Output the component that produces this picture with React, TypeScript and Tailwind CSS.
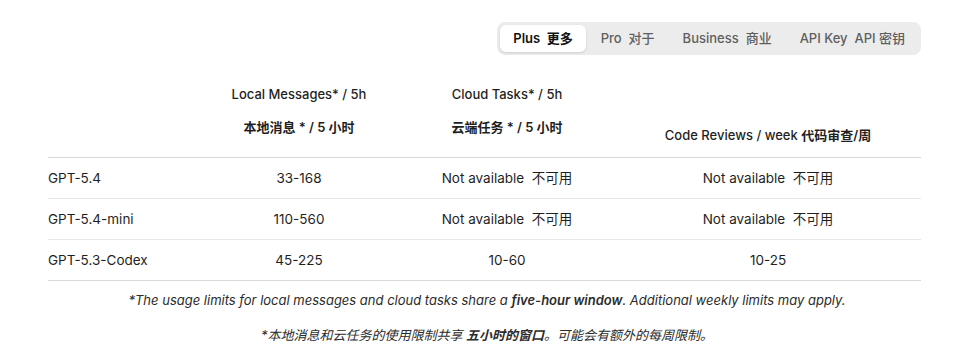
const FONT = "font-['Inter','Noto_Sans_CJK_SC',sans-serif]";

type Row = {
  model: string;
  local: string;
  cloud: string;
  review: string;
};

const NA = "Not available  不可用";

const rows: Row[] = [
  { model: "GPT-5.4", local: "33-168", cloud: NA, review: NA },
  { model: "GPT-5.4-mini", local: "110-560", cloud: NA, review: NA },
  { model: "GPT-5.3-Codex", local: "45-225", cloud: "10-60", review: "10-25" },
];

const tabs = [
  { label: "Plus  更多", active: true },
  { label: "Pro  对于", active: false },
  { label: "Business  商业", active: false },
  { label: "API Key  API 密钥", active: false },
];

export default function App() {
  return (
    <div className={`${FONT} h-[360px] w-[974px] bg-white text-[#1f1f1f]`}>
      <div className="flex justify-end pr-[53px] pt-[22px]">
        <div className="flex items-center gap-[2px] rounded-lg bg-[#ececec] p-[3px]">
          {tabs.map((tab) => (
            <button
              key={tab.label}
              className={
                tab.active
                  ? "h-[27px] whitespace-pre rounded-md bg-white px-[13px] text-[13px] font-semibold text-[#111] shadow-sm"
                  : "h-[27px] whitespace-pre rounded-md px-[13px] text-[13px] font-medium text-[#5f5f5f]"
              }
            >
              {tab.label}
            </button>
          ))}
        </div>
      </div>

      <div className="ml-[48px] mr-[53px] mt-[30px]">
        <table className="w-full border-collapse text-[13.5px] leading-[18px]">
          <thead>
            <tr className="border-b border-[#d6d9dd] text-[13px]">
              <th className="w-[151px]" />
              <th className="w-[200px] pb-[21px] align-bottom font-medium">
                <div>Local Messages* / 5h</div>
                <div className="mt-[15px] font-semibold">本地消息 * / 5 小时</div>
              </th>
              <th className="w-[216px] pb-[21px] align-bottom font-medium">
                <div>Cloud Tasks* / 5h</div>
                <div className="mt-[15px] font-semibold">云端任务 * / 5 小时</div>
              </th>
              <th className="pb-[13px] align-bottom font-medium">
                <span>Code Reviews / week </span>
                <span className="font-semibold"> 代码审查/周</span>
              </th>
            </tr>
          </thead>
          <tbody>
            {rows.map((row, i) => (
              <tr
                key={row.model}
                className={
                  i < rows.length - 1
                    ? "h-[41px] border-b border-[#e8e8e8]"
                    : "h-[41px] border-b border-[#d6d9dd]"
                }
              >
                <td className="text-left">{row.model}</td>
                <td className="text-center">{row.local}</td>
                <td className="whitespace-pre text-center">{row.cloud}</td>
                <td className="whitespace-pre text-center">{row.review}</td>
              </tr>
            ))}
          </tbody>
        </table>
      </div>

      <div className="mt-[10px] text-center text-[13px] leading-[18px] italic text-[#2b2b2b]">
        <p>
          *The usage limits for local messages and cloud tasks share a{" "}
          <b className="font-semibold">five-hour window</b>. Additional weekly limits may apply.
        </p>
        <p className="mt-[17px]">
          *本地消息和云任务的使用限制共享 <b className="font-semibold">五小时的窗口</b>。可能会有额外的每周限制。
        </p>
      </div>
    </div>
  );
}
